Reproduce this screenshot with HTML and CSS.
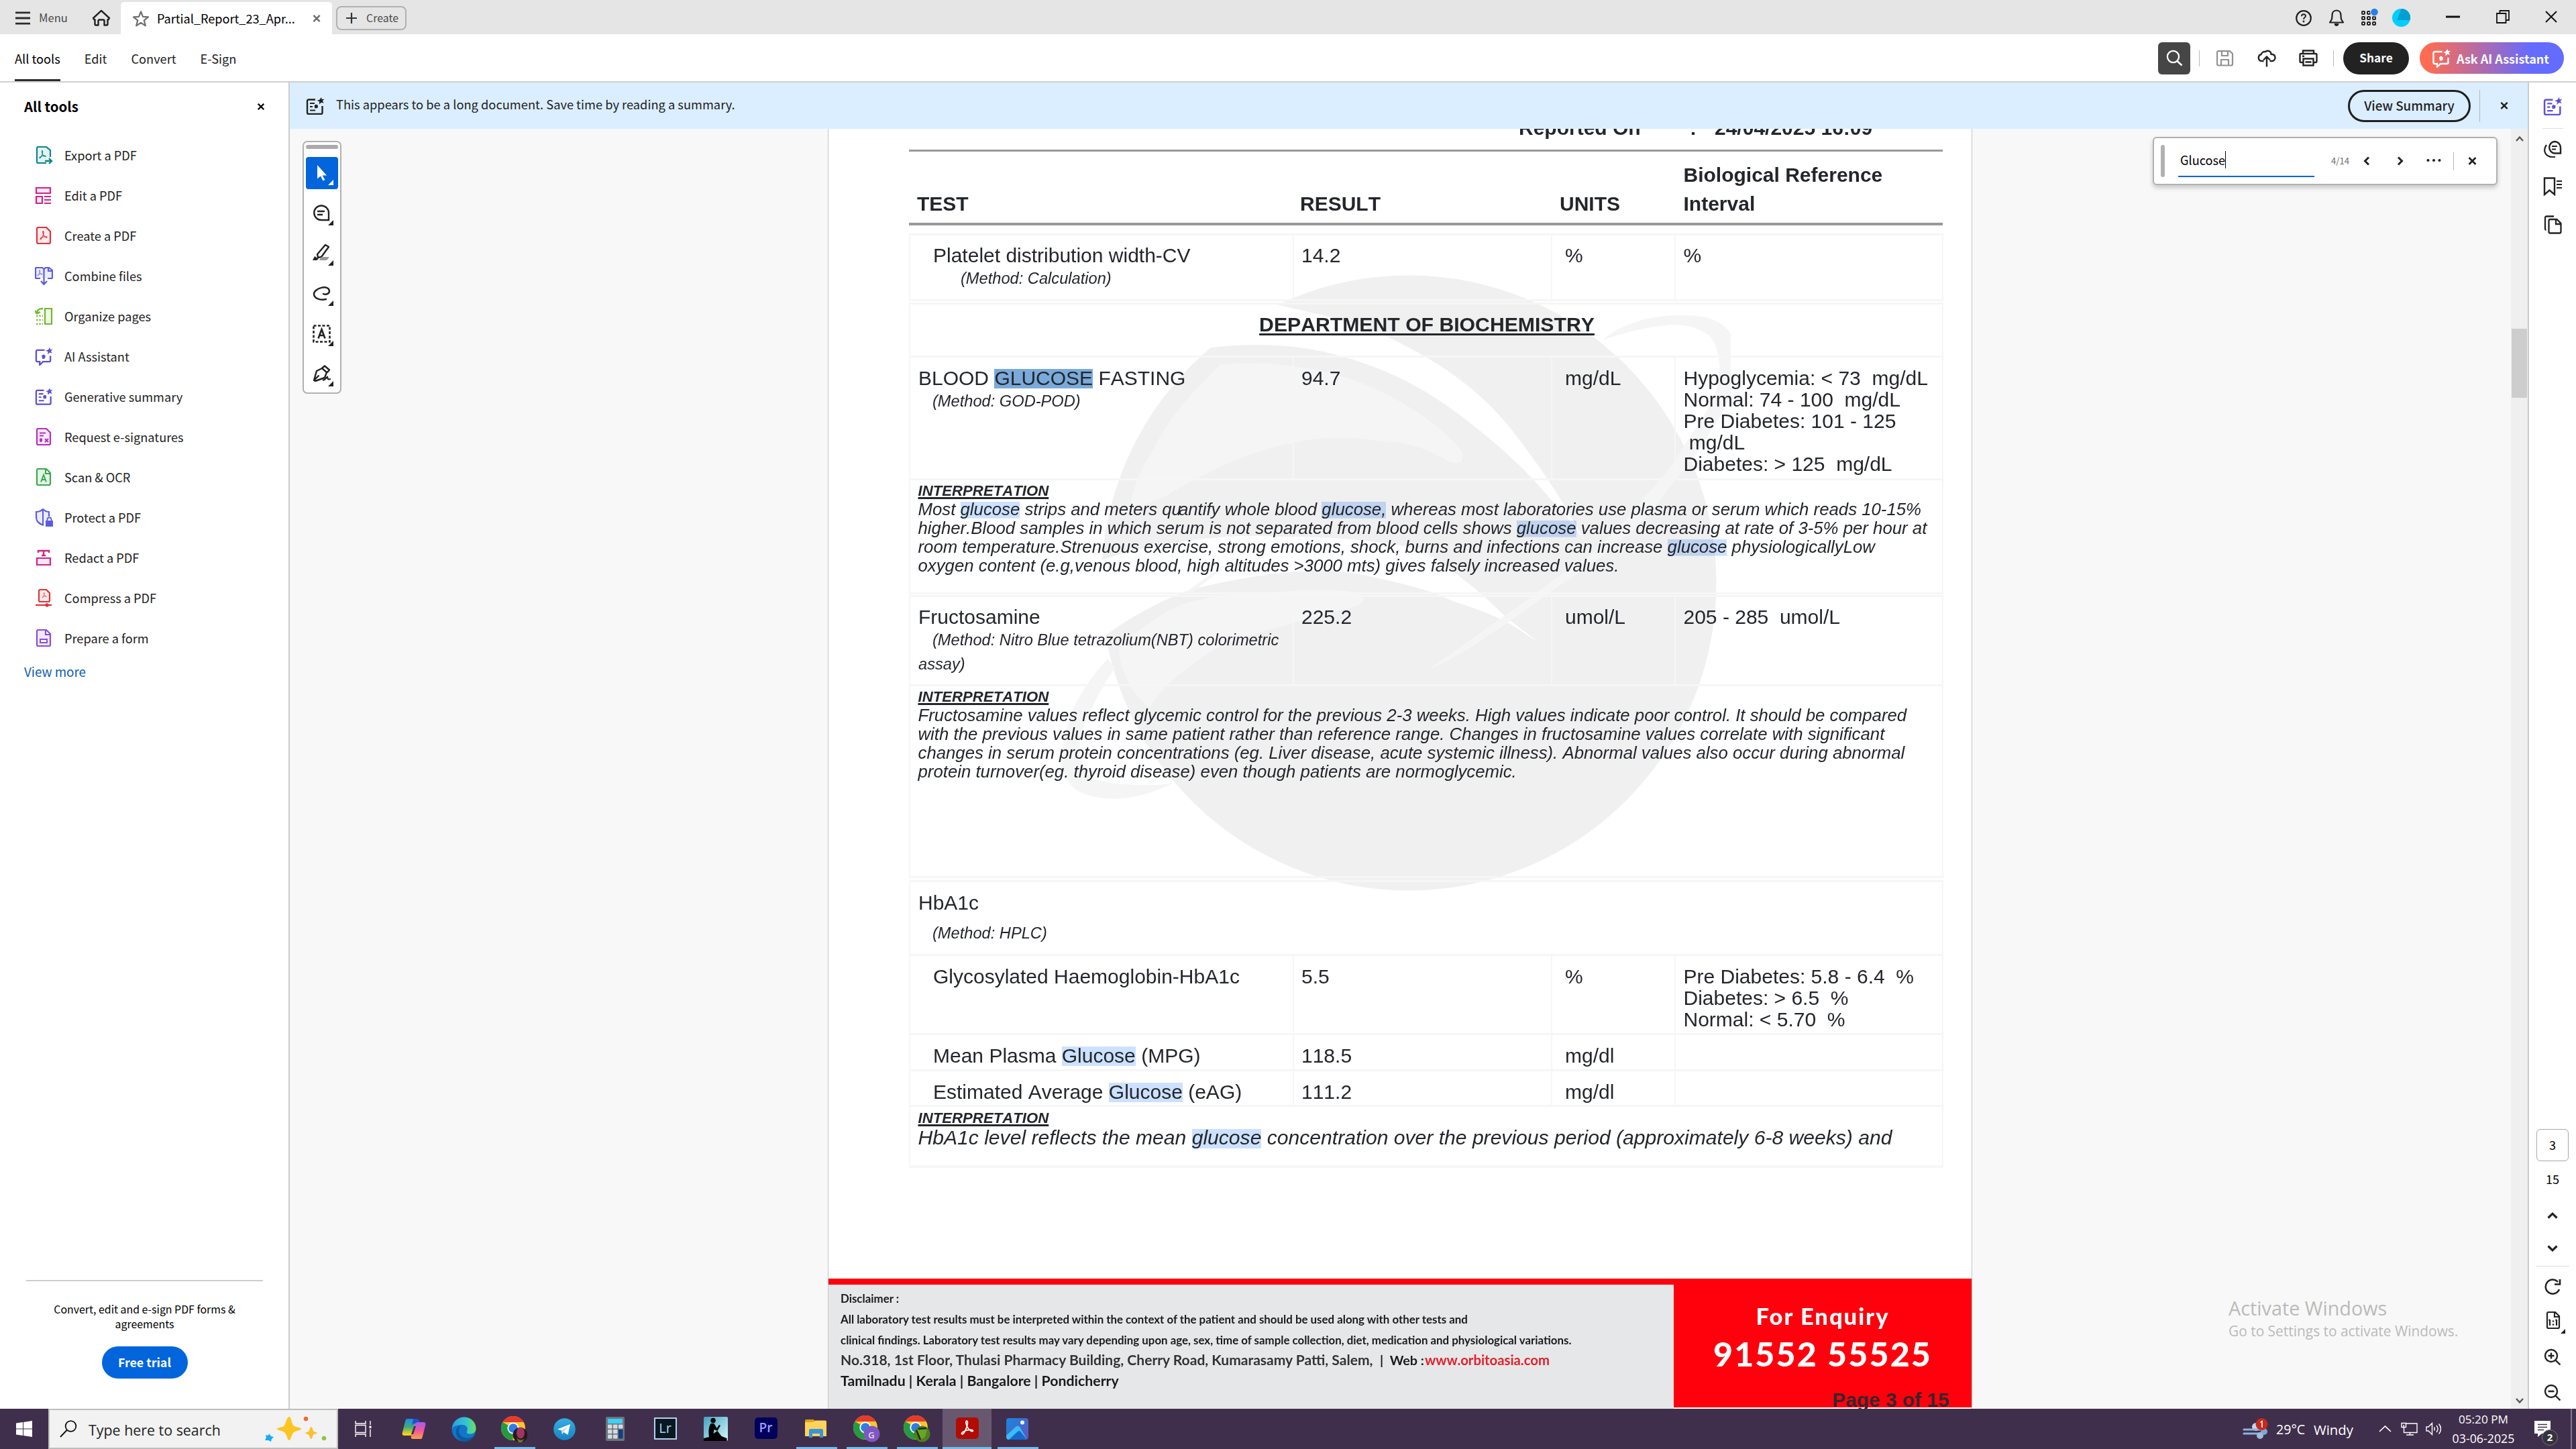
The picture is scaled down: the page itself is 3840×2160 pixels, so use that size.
FILE: index.html
```html
<!DOCTYPE html>
<html lang="en">
<head>
<meta charset="utf-8">
<title>Partial_Report_23_Apr</title>
<link rel="stylesheet" href="styles.css">
</head>
<body>
<svg class="defs" aria-hidden="true">
  <defs>
    <linearGradient id="gCop" x1="0" y1="0" x2="0" y2="1"><stop offset="0" stop-color="#1f8bf0"/><stop offset=".5" stop-color="#3fae74"/><stop offset=".9" stop-color="#f0d020"/></linearGradient>
    <linearGradient id="gCop2" x1="0" y1="0" x2="0" y2="1"><stop offset="0" stop-color="#a45cf0"/><stop offset=".5" stop-color="#f0569b"/><stop offset="1" stop-color="#ffa24a"/></linearGradient>
    <linearGradient id="gEdge" x1="0" y1="0" x2="1" y2="0"><stop offset="0" stop-color="#2a9fe0"/><stop offset=".6" stop-color="#35c6d0"/><stop offset="1" stop-color="#6ee05a"/></linearGradient>
    <linearGradient id="gTg" x1="0" y1="0" x2="0" y2="1"><stop offset="0" stop-color="#37aee2"/><stop offset="1" stop-color="#1583c6"/></linearGradient>
    <linearGradient id="gPh" x1="0" y1="0" x2="1" y2="1"><stop offset="0" stop-color="#1488e0"/><stop offset="1" stop-color="#6a52b8"/></linearGradient>
    <linearGradient id="gKd" x1="0" y1="0" x2="1" y2="1"><stop offset="0" stop-color="#3fa3c4"/><stop offset="1" stop-color="#dcf6fa"/></linearGradient>
  </defs>
  <symbol id="spark" viewBox="0 0 12 12"><path d="M7 0l1 3.4L12 3 9 6l2.2 3.6L7 8.4 3.600 11.500l.4-4.500L0 5.200l4.200-1z"/></symbol>
  <symbol id="summary" viewBox="0 0 28 26"><path d="M14 3.500H4a2 2 0 0 0-2 2V23a2 2 0 0 0 2 2h18.500a2 2 0 0 0 2-2V13" fill="none" stroke="currentColor" stroke-width="2.400"/><path d="M6 9h7M6 14h4M6 19.500h8" stroke="currentColor" stroke-width="2.200"/><path d="M12.500 13l2-2.500 3.500 1.500-.5 4-4 .5z" fill="currentColor"/><use href="#spark" x="16" y="0" width="12" height="11" fill="currentColor"/></symbol>
  <symbol id="aichat" viewBox="0 0 28 28"><path d="M15 4H4a2 2 0 0 0-2 2v14a2 2 0 0 0 2 2h3.500v5l5-5H22a2 2 0 0 0 2-2v-7" fill="none" stroke="currentColor" stroke-width="2.400"/><path d="M10.500 12.500l3-2 3 2.500-1 4-4 .5z" fill="currentColor"/><use href="#spark" x="16" y="0" width="12" height="11" fill="currentColor"/></symbol>
  <symbol id="x" viewBox="0 0 14 14"><path d="M2 2l10 10M12 2L2 12" stroke="currentColor" stroke-width="2.700" fill="none"/></symbol>
  <symbol id="chev" viewBox="0 0 10 14"><path d="M8 1.500L2.500 7 8 12.500" stroke="currentColor" stroke-width="3" fill="none"/></symbol>
  <symbol id="chevUp" viewBox="0 0 16 10"><path d="M1.500 8.500L8 2.200l6.500 6.300" stroke="currentColor" stroke-width="3.200" fill="none"/></symbol>
  <symbol id="acro" viewBox="0 0 20 22"><path d="M9 1c2 0 1.500 4 .5 7.500C8.500 12 5 20 3 20s-2-2.500 3-4.500 12-2.500 12-.5-4 1-7-3.500S7 1 9 1z" fill="none" stroke="currentColor" stroke-width="1.700"/></symbol>
  <symbol id="chrome" viewBox="0 0 36 36"><circle cx="18" cy="18" r="18" fill="#fdc52d"/><path d="M18 18l-.5 18A18 18 0 0 1 2.400 9z" fill="#269a43"/><path d="M18 18L2.400 9h31.200A18 18 0 0 0 2.400 9z" fill="#e33b2e"/><circle cx="18" cy="18" r="8.600" fill="#fff"/><circle cx="18" cy="18" r="6.800" fill="#2f7de9"/></symbol>
</svg>

<div class="tabbar">
  <svg class="burger" width="23" height="20" viewBox="0 0 23 20"><path d="M0 1.800h22M0 10h22M0 18.200h22" stroke="#2c2c2c" stroke-width="2.800"/></svg>
  <span class="menu">Menu</span>
  <svg class="home" width="28" height="25" viewBox="0 0 28 25"><path d="M14 1.800L2 13l1.500 2.200H4.500V22a1.500 1.500 0 0 0 1.500 1.500h3.500V17a1.500 1.500 0 0 1 1.500-1.500h6a1.500 1.500 0 0 1 1.500 1.500v6.500H22a1.500 1.500 0 0 0 1.500-1.500v-6.800h1L26 13z" fill="none" stroke="#222" stroke-width="2.400" stroke-linejoin="round"/></svg>
  <div class="tab">
    <svg width="26" height="25" viewBox="0 0 26 25"><path d="M13 2.300l3 7.500 8 .6-6.200 5 2 7.900L13 18.900l-6.800 4.400 2-7.900L2 10.400l8-.6z" fill="none" stroke="#6e6e6e" stroke-width="2.200" stroke-linejoin="round"/></svg>
    <span class="tab-title">Partial_Report_23_Apr...</span>
    <svg class="tab-x" width="14" height="13"><use href="#x"/></svg>
  </div>
  <div class="create"><svg width="16" height="16" viewBox="0 0 16 16"><path d="M8 0v16M0 8h16" stroke="#333" stroke-width="2.200"/></svg><span>Create</span></div>
  <div class="sys">
    <svg width="26" height="26" viewBox="0 0 26 26"><circle cx="13" cy="13" r="10.800" fill="none" stroke="#222" stroke-width="2.200"/><path d="M10 10.200c0-4 6-3.800 6-.4 0 2.400-3 2.200-3 5" fill="none" stroke="#222" stroke-width="2"/><circle cx="13" cy="18" r="1.400" fill="#222"/></svg>
    <svg width="24" height="28" viewBox="0 0 24 28"><path d="M12 2.500c-4.500 0-6.500 3.500-6.500 7.500 0 6-1 7-3.500 10.500h20C19.500 17 18.500 16 18.500 10c0-4-2-7.500-6.500-7.500z" fill="none" stroke="#222" stroke-width="2.200" stroke-linejoin="round"/><path d="M9 22.500h6a3 3 0 0 1-6 0z" fill="#222" stroke="#222"/></svg>
    <svg width="26" height="28" viewBox="0 0 26 28"><g fill="none" stroke="#222" stroke-width="2"><rect x="2" y="6" width="4" height="4" rx="1"/><rect x="10" y="6" width="4" height="4" rx="1"/><rect x="2" y="14" width="4" height="4" rx="1"/><rect x="10" y="14" width="4" height="4" rx="1"/><rect x="18" y="14" width="4" height="4" rx="1"/><rect x="2" y="22" width="4" height="4" rx="1"/><rect x="10" y="22" width="4" height="4" rx="1"/><rect x="18" y="22" width="4" height="4" rx="1"/></g><circle cx="20.500" cy="7" r="6.500" fill="#e5e5e5"/><circle cx="20.500" cy="7" r="5.300" fill="#2680eb"/></svg>
    <svg width="27" height="27" viewBox="0 0 27 27"><circle cx="13.500" cy="13.500" r="13.500" fill="#00ceff"/><path d="M13.500 0a13.500 13.500 0 0 1 13.300 17H7z" fill="#00a0cf"/></svg>
    <svg class="min" width="22" height="20" viewBox="0 0 22 20"><path d="M0 10h21" stroke="#111" stroke-width="3"/></svg>
    <svg class="rest" width="20" height="20" viewBox="0 0 20 20"><path d="M1 5h13.500v14H1zM5.500 5V1H19v14h-4.500" fill="none" stroke="#111" stroke-width="1.800"/></svg>
    <svg class="cls" width="18" height="18" viewBox="0 0 18 18"><path d="M1 1l16 16M17 1L1 17" stroke="#111" stroke-width="2"/></svg>
  </div>
</div>

<div class="toolbar">
  <nav><span class="on">All tools</span><span>Edit</span><span>Convert</span><span>E-Sign</span></nav>
  <div class="actions">
    <div class="search"><svg width="25" height="25" viewBox="0 0 25 25"><circle cx="10.500" cy="10.500" r="8.600" fill="none" stroke="#fff" stroke-width="2.300"/><path d="M16.500 17l7 6.500" stroke="#fff" stroke-width="2.500"/></svg></div>
    <i class="vr v1"></i>
    <svg class="save" width="26" height="24" viewBox="0 0 26 24"><path d="M3 1.200h17L24 5v15.500a2 2 0 0 1-2 2H3a2 2 0 0 1-2-2V3.200a2 2 0 0 1 2-2zM8 1.500V8h9V1.500M7 22v-8h11v8" fill="none" stroke="#919191" stroke-width="2.200"/></svg>
    <svg class="cloud" width="28" height="26" viewBox="0 0 28 26"><path d="M9.500 17H6.500a5 5 0 0 1-1-9.800A6 6 0 0 1 12 3c5-3 8.500.5 8.500 3.800 5 .2 6 2.700 6 5.200s-2 5-4.500 5h-3.500" fill="none" stroke="#222" stroke-width="2.400"/><path d="M14 25.500V11M9 15.500l5-5 5 5" fill="none" stroke="#222" stroke-width="2.400"/></svg>
    <svg class="print" width="28" height="25" viewBox="0 0 28 25"><path d="M6 6V1.500h16V6M6 19H3a1.500 1.500 0 0 1-1.500-1.500V7.500A1.500 1.500 0 0 1 3 6h22a1.500 1.500 0 0 1 1.500 1.500v10A1.500 1.500 0 0 1 25 19h-3M6.500 13.500h15v10h-15zM9.500 18.500h9M5 9.800h3" fill="none" stroke="#222" stroke-width="2.400"/></svg>
    <i class="vr v2"></i>
    <div class="share">Share</div>
    <div class="askai"><svg width="29" height="28"><use href="#aichat"/></svg><span>Ask AI Assistant</span></div>
  </div>
</div>

<div class="body">
  <aside>
    <div class="aside-head"><b>All tools</b><svg width="14" height="12"><use href="#x"/></svg></div>
    <ul>
      <li><svg class="teal" width="27" height="27" viewBox="0 0 27 27"><path d="M17 25H5a2 2 0 0 1-2-2V3a2 2 0 0 1 2-2h12l6 5v10" fill="#e3f3f3" stroke="currentColor" stroke-width="2.200"/><use href="#acro" x="5" y="6" width="13" height="13"/><path d="M15 22h9M21 18l4 4-4 4" stroke="currentColor" stroke-width="2.400" fill="none"/></svg>Export a PDF</li>
      <li><svg class="pink" width="27" height="27" viewBox="0 0 27 27"><path d="M2 2h21v8H2zM2 15h9v10H2z" fill="#fbe6f2" stroke="currentColor" stroke-width="2.200"/><path d="M14 15h10M14 20h10M14 25h10" stroke="currentColor" stroke-width="2.200"/></svg>Edit a PDF</li>
      <li><svg class="red" width="27" height="27" viewBox="0 0 27 27"><path d="M5 1h12l6 6v16a2 2 0 0 1-2 2H5a2 2 0 0 1-2-2V3a2 2 0 0 1 2-2z" fill="#fdebea" stroke="currentColor" stroke-width="2.200"/><use href="#acro" x="6" y="6" width="14" height="14"/></svg>Create a PDF</li>
      <li><svg class="blue" width="27" height="27" viewBox="0 0 27 27"><path d="M8 17H2a1 1 0 0 1-1-1V2a1 1 0 0 1 1-1h9l2.500 2L16 1h5l5 4v11a1 1 0 0 1-1 1h-6" fill="#ececfb" stroke="currentColor" stroke-width="2.200"/><path d="M13.500 3v22M9 21l4.500 5 4.500-5M20 1v5h6" fill="none" stroke="currentColor" stroke-width="2.200"/><use href="#acro" x="3" y="4" width="9" height="10"/></svg>Combine files</li>
      <li><svg class="lime" width="27" height="27" viewBox="0 0 27 27"><path d="M15 2h10v23H15z" fill="#f0f8e6" stroke="currentColor" stroke-width="2.200"/><path d="M2 13h10M2 19h10M2 25h10" stroke="currentColor" stroke-width="2.200" stroke-dasharray="2.500 1.800"/><path d="M3 9c0-5 4-7.500 9-7M0 5l3 4.500L8 7" fill="none" stroke="currentColor" stroke-width="2.400"/></svg>Organize pages</li>
      <li><svg class="indigo" width="27" height="27"><use href="#aichat"/></svg>AI Assistant</li>
      <li><svg class="indigo" width="27" height="26"><use href="#summary"/></svg>Generative summary</li>
      <li><svg class="magenta" width="27" height="27" viewBox="0 0 27 27"><path d="M5 1h12l6 6v16a2 2 0 0 1-2 2H5a2 2 0 0 1-2-2V3a2 2 0 0 1 2-2z" fill="#fae8fb" stroke="currentColor" stroke-width="2.200"/><path d="M7 7.500h9M7 11.500h6M15 16l5 5M20 16l-5 5" stroke="currentColor" stroke-width="2"/><path d="M7 15.500h4v4l-2 2-2-2z" fill="currentColor"/></svg>Request e-signatures</li>
      <li><svg class="green" width="27" height="27" viewBox="0 0 27 27"><path d="M5 1h12l6 6v16a2 2 0 0 1-2 2H5a2 2 0 0 1-2-2V3a2 2 0 0 1 2-2zM16 1v7h7" fill="#e6f5e9" stroke="currentColor" stroke-width="2.200"/><path d="M9 20.500l4-10.500 4 10.500M10.500 17h5" fill="none" stroke="currentColor" stroke-width="2"/></svg>Scan &amp; OCR</li>
      <li><svg class="blue" width="27" height="27" viewBox="0 0 27 27"><path d="M13 25C5 22 2 19 2 13V5c5 0 7-1 10-4 3 3 5 4 9 4v7" fill="#ececfb" stroke="currentColor" stroke-width="2.200"/><path d="M12 1v24" stroke="currentColor" stroke-width="2"/><path d="M16 18h11v9H16z" fill="currentColor"/><path d="M18.500 18v-1.500a3 3 0 0 1 6 0V18" fill="none" stroke="currentColor" stroke-width="1.800"/></svg>Protect a PDF</li>
      <li><svg class="pink" width="27" height="27" viewBox="0 0 27 27"><path d="M3 14h20v10H3z" fill="#fbe6f2" stroke="currentColor" stroke-width="2.200"/><path d="M5 6V3h16v3M13 3v7M10 10h6" fill="none" stroke="currentColor" stroke-width="2.400"/></svg>Redact a PDF</li>
      <li><svg class="red" width="27" height="27" viewBox="0 0 27 27"><path d="M8 1h9l5 5v11a2 2 0 0 1-2 2H8a2 2 0 0 1-2-2V3a2 2 0 0 1 2-2z" fill="#fdebea" stroke="currentColor" stroke-width="2.200"/><use href="#acro" x="9" y="5" width="10" height="9"/><path d="M1 24h24" stroke="currentColor" stroke-width="2.200"/><circle cx="18" cy="24" r="2.700" fill="currentColor"/></svg>Compress a PDF</li>
      <li><svg class="purple" width="27" height="27" viewBox="0 0 27 27"><path d="M5 1h12l6 6v16a2 2 0 0 1-2 2H5a2 2 0 0 1-2-2V3a2 2 0 0 1 2-2zM16 1v7h7" fill="#f1e8fa" stroke="currentColor" stroke-width="2.200"/><path d="M8 15h10v5H8z" fill="#fff" stroke="currentColor" stroke-width="2"/></svg>Prepare a form</li>
    </ul>
    <a class="more">View more</a>
    <div class="promo"><p>Convert, edit and e-sign PDF forms &amp; agreements</p><div class="trial">Free trial</div></div>
  </aside>

  <main>
    <div class="banner">
      <svg width="28" height="26"><use href="#summary"/></svg>
      <span>This appears to be a long document. Save time by reading a summary.</span>
      <div class="viewsum">View Summary</div>
      <i class="vr"></i>
      <svg class="bx" width="14" height="13"><use href="#x"/></svg>
    </div>
    <div class="stage">
      <section class="page">
        <svg class="mark-art" width="1020" height="930" viewBox="1560 405 1020 930">
          <circle cx="2100" cy="869" r="458.500" fill="#f0f0f0"/>
          <path d="M1900 453C1960 468 2010 476 2064 500C2170 550 2225 600 2268 660C2310 715 2340 765 2363 808C2345 780 2330 765 2308 740C2270 695 2230 660 2182 623C2120 575 2060 548 2003 532C1945 514 1870 509 1800 519L1770 500L1850 430Z" fill="#fff"/>
          <path d="M1635 836L1642 835C1680 822 1710 815 1737 812C1800 800 1850 797 1909 800C1990 800 2060 806 2120 820C2160 845 2205 880 2245 920L2294 958C2275 946 2258 933 2239 924C2215 912 2190 904 2165 896C2130 878 2090 870 2050 861C2010 850 1970 850 1932 852C1870 857 1810 870 1771 880C1725 898 1685 920 1651 945L1620 960L1600 850Z" fill="#fff"/>
          <path d="M1820 543C1850 541 1890 540 1927 546C2000 553 2060 580 2120 619C2150 640 2180 668 2181 680C2180 692 2172 692 2160 688C2120 664 2090 658 2050 657C2020 651 1970 650 1929 660C1880 670 1850 682 1823 694C1785 712 1760 725 1737 740L1684 762C1690 715 1705 695 1720 668C1745 620 1780 580 1820 543Z" fill="#f5f5f5"/>
          <path d="M1668 965C1700 935 1735 912 1765 900C1810 887 1860 882 1909 882C1950 878 2000 878 2024 884C2040 892 2032 902 2012 906C1985 913 1955 920 1927 929C1890 940 1850 950 1823 961C1790 980 1770 995 1748 1014C1730 1030 1722 1042 1714 1055C1695 1040 1685 1025 1679 1010C1670 990 1668 980 1668 965Z" fill="#f5f5f5"/>
          <path d="M2389 507C2420 480 2465 469 2509 470C2540 470 2555 475 2567 484C2585 498 2590 515 2590 530C2592 548 2588 565 2584 580C2575 605 2562 625 2549 644C2535 670 2510 700 2492 722C2475 745 2463 760 2452 773C2405 820 2360 850 2314 880C2280 905 2250 928 2222 945C2190 968 2160 985 2130 998C2190 955 2240 920 2280 892C2320 860 2345 845 2371 827C2400 800 2430 770 2452 740C2480 710 2500 685 2512 662C2530 635 2545 615 2555 591C2562 570 2565 555 2563 541C2560 520 2556 505 2544 498C2530 487 2510 484 2492 484C2455 487 2420 496 2389 507Z" fill="#f5f5f5"/>
          <path d="M1748 1167C1720 1183 1680 1194 1645 1190C1625 1188 1608 1182 1599 1173C1585 1158 1582 1140 1583 1124C1585 1100 1592 1078 1599 1059C1612 1030 1630 1005 1651 982L1662 996C1645 1020 1632 1045 1622 1067C1612 1090 1608 1105 1610 1120C1612 1135 1616 1147 1622 1153C1638 1166 1660 1169 1679 1169C1705 1171 1730 1171 1748 1167Z" fill="#f5f5f5"/>
          <path d="M1768 882L1886 800L1778 882Z" fill="#f5f5f5"/>
        </svg>
        <div class="reported"><span>Reported On</span><span>:</span><span>24/04/2025 16:09</span></div>
        <div class="grid thead"><div>TEST</div><div>RESULT</div><div>UNITS</div><div>Biological Reference<br>Interval</div></div>

        <div class="box b1">
          <div class="grid row"><div><p class="in">Platelet distribution width-CV</p><em class="in3 gap4">(Method: Calculation)</em></div><div>14.2</div><div>%</div><div>%</div></div>
        </div>
        <div class="box b2">
          <div class="dept">DEPARTMENT OF BIOCHEMISTRY</div>
          <div class="grid row gluc"><div><p>BLOOD <mark class="cur">GLUCOSE</mark> FASTING</p><em class="gap4">(Method: GOD-POD)</em></div><div>94.7</div><div>mg/dL</div><div class="pre">Hypoglycemia: &lt; 73  mg/dL
Normal: 74 - 100  mg/dL
Pre Diabetes: 101 - 125
 mg/dL
Diabetes: &gt; 125  mg/dL</div></div>
          <div class="interp"><h4>INTERPRETATION</h4><p>Most <mark>glucose</mark> strips and meters q<span class="tight">u</span>antify whole blood <mark>glucose,</mark> whereas most laboratories use plasma or serum which reads 10-15%<br>higher.Blood samples in which serum is not separated from blood cells shows <mark>glucose</mark> values decreasing at rate of 3-5% per hour at<br>room temperature.Strenuous exercise, strong emotions, shock, burns and infections can increase <mark>glucose</mark> physiologicallyLow<br>oxygen content (e.g,venous blood, high altitudes &gt;3000 mts) gives falsely increased values.</p></div>
        </div>
        <div class="box b3">
          <div class="grid row"><div><p>Fructosamine</p><em class="wrap">(Method: Nitro Blue tetrazolium(NBT) colorimetric<br>assay)</em></div><div>225.2</div><div>umol/L</div><div class="pre">205 - 285  umol/L</div></div>
          <div class="interp"><h4>INTERPRETATION</h4><p>Fructosamine values reflect glycemic control for the previous 2-3 weeks. High values indicate poor control. It should be compared<br>with the previous values in same patient rather than reference range. Changes in fructosamine values correlate with significant<br>changes in serum protein concentrations (eg. Liver disease, acute systemic illness). Abnormal values also occur during abnormal<br>protein turnover(eg. thyroid disease) even though patients are normoglycemic.</p></div>
        </div>
        <div class="box b4">
          <div class="hba"><p>HbA1c</p><em>(Method: HPLC)</em></div>
          <div class="grid row r115"><div><p class="in">Glycosylated Haemoglobin-HbA1c</p></div><div>5.5</div><div>%</div><div class="pre">Pre Diabetes: 5.8 - 6.4  %
Diabetes: &gt; 6.5  %
Normal: &lt; 5.70  %</div></div>
          <div class="grid row r51"><div><p class="in">Mean Plasma <mark>Glucose</mark> (MPG)</p></div><div>118.5</div><div>mg/dl</div><div></div></div>
          <div class="grid row r50"><div><p class="in">Estimated Average <mark>Glucose</mark> (eAG)</p></div><div>111.2</div><div>mg/dl</div><div></div></div>
          <div class="interp big"><h4>INTERPRETATION</h4><p>HbA1c level reflects the mean <mark>glucose</mark> concentration over the previous period (approximately 6-8 weeks) and</p></div>
        </div>

        <footer>
          <div class="disc">
            <p>Disclaimer :</p>
            <p>All laboratory test results must be interpreted within the context of the patient and should be used along with other tests and</p>
            <p>clinical findings. Laboratory test results may vary depending upon age, sex, time of sample collection, diet, medication and physiological variations.</p>
            <p class="addr"><span class="soft">No.318, 1st Floor, Thulasi Pharmacy Building, Cherry Road, Kumarasamy Patti, Salem,</span><span class="web">| &nbsp;Web :</span><span class="www">www.orbitoasia.com</span></p>
            <p class="cities">Tamilnadu | Kerala | Bangalore | Pondicherry</p>
          </div>
          <div class="enq"><p class="e1">For Enquiry</p><p class="e2">91552 55525</p><p class="e3">Page 3 of 15</p></div>
        </footer>
      </section>

      <div class="scroll">
        <svg width="12" height="9" viewBox="0 0 12 9"><path d="M1 8l5-5.500L11 8" fill="none" stroke="#555" stroke-width="2.400"/></svg>
        <i class="thumb"></i>
        <svg width="12" height="9" viewBox="0 0 12 9"><path d="M1 1l5 5.500L11 1" fill="none" stroke="#555" stroke-width="2.400"/></svg>
      </div>

      <div class="quick">
        <i class="grip"></i>
        <div class="q on"><svg width="48" height="48" viewBox="0 0 48 48"><path d="M17 12l14 15.500h-6.500l4 6.500-3 1.500-3.500-7-5 4z" fill="#fff"/><path d="M41 34v8h-8z" fill="#fff"/></svg></div>
        <div class="q"><svg width="48" height="48" viewBox="0 0 48 48"><path d="M23 12.500a11 11 0 0 1 11 11V34H23a10.700 10.700 0 0 1 0-21.500z" fill="none" stroke="#222" stroke-width="2.400"/><path d="M17 21h11M17 26h8" stroke="#222" stroke-width="2.400"/><path d="M41 34v8h-8z" fill="#222"/></svg></div>
        <div class="q"><svg width="48" height="48" viewBox="0 0 48 48"><path d="M17 25L29 11l5 3-11 15-5 1z" fill="none" stroke="#222" stroke-width="2.400" stroke-linejoin="round"/><path d="M10 34l3-6 6 4-3 2z" fill="#222"/><path d="M20 34l3-5h12l-4 5z" fill="#999"/><path d="M41 34v8h-8z" fill="#222"/></svg></div>
        <div class="q"><svg width="48" height="48" viewBox="0 0 48 48"><path d="M30 32c-9 2-18-1-18-8 0-8 22-15 23-4 0 4-6 6-9 4" fill="none" stroke="#222" stroke-width="2.500" stroke-linecap="round"/><path d="M41 34v8h-8z" fill="#222"/></svg></div>
        <div class="q"><svg width="48" height="48" viewBox="0 0 48 48"><rect x="11.500" y="11.500" width="24" height="24" fill="none" stroke="#222" stroke-width="2.600" stroke-dasharray="4 2.500"/><path d="M18.500 30.500l5-13.500 5 13.500M20.500 26h6.500" fill="none" stroke="#222" stroke-width="2.600"/><path d="M41 34v8h-8z" fill="#222"/></svg></div>
        <div class="q"><svg width="48" height="48" viewBox="0 0 48 48"><path d="M12 33l4-14 8-4 7 6-3 8-14 5zM24 15l4-3.500 7 6-3.500 4M12.500 32.500l7-7" fill="none" stroke="#222" stroke-width="2.400" stroke-linejoin="round"/><path d="M25 33c5-1 4-3 7-5 1 3 0 4 5 3" fill="none" stroke="#222" stroke-width="2.200"/><path d="M41 34v8h-8z" fill="#222"/></svg></div>
      </div>

      <div class="find">
        <i class="fgrip"></i>
        <div class="finput">Glucose<i></i></div>
        <span class="count">4/14</span>
        <svg class="f1" width="10" height="14"><use href="#chev"/></svg>
        <svg class="f2" width="10" height="14"><use href="#chev"/></svg>
        <svg class="f3" width="22" height="6" viewBox="0 0 22 6"><circle cx="2.500" cy="3" r="2.100" fill="#222"/><circle cx="11" cy="3" r="2.100" fill="#222"/><circle cx="19.500" cy="3" r="2.100" fill="#222"/></svg>
        <i class="vr"></i>
        <svg class="f4" width="15" height="14"><use href="#x"/></svg>
      </div>

      <div class="activate"><p>Activate Windows</p><p>Go to Settings to activate Windows.</p></div>
    </div>
  </main>

  <div class="rail">
    <svg class="r1" width="29" height="27"><use href="#summary"/></svg>
    <i class="hr"></i>
    <svg class="r2" width="28" height="27" viewBox="0 0 28 27"><path d="M17 2a9 9 0 0 1 9 9v8.500h-9A8.800 8.800 0 0 1 17 2z" fill="none" stroke="#222" stroke-width="2.400"/><path d="M13 9h8M13 13.500h6" stroke="#222" stroke-width="2.200"/><path d="M5 7c-6 8-2 18 9 18h4" fill="none" stroke="#222" stroke-width="2.200"/></svg>
    <svg class="r3" width="29" height="28" viewBox="0 0 29 28"><path d="M2 1.500h15V26l-7.500-6.500L2 26z" fill="none" stroke="#222" stroke-width="2.400"/><path d="M20 6h8M20 11h8M20 16h8" stroke="#222" stroke-width="2.200"/></svg>
    <svg class="r4" width="27" height="29" viewBox="0 0 27 29"><path d="M9.500 6h10l6 6v12.500a2 2 0 0 1-2 2h-14a2 2 0 0 1-2-2V8a2 2 0 0 1 2-2zM18 6v7h7" fill="none" stroke="#222" stroke-width="2.300"/><path d="M3.500 22A2 2 0 0 1 2 20V3.500a2 2 0 0 1 2-2h11" fill="none" stroke="#222" stroke-width="2.300"/></svg>
    <div class="pgbox">3</div>
    <span class="pgtot">15</span>
    <svg class="r5" width="16" height="10"><use href="#chevUp"/></svg>
    <svg class="r6" width="16" height="10"><use href="#chevUp"/></svg>
    <i class="hr h2"></i>
    <svg class="r7" width="26" height="26" viewBox="0 0 26 26"><path d="M23 17a10.500 10.500 0 1 1-2-11" fill="none" stroke="#222" stroke-width="2.500"/><path d="M24 2v7.500h-8" fill="none" stroke="#222" stroke-width="2.600"/></svg>
    <svg class="r8" width="34" height="34" viewBox="0 0 34 34"><path d="M9 2h10l6 6v16a2 2 0 0 1-2 2H9a2 2 0 0 1-2-2V4a2 2 0 0 1 2-2zM18 2v7h7M11 13v9M21 13v9M9.500 14.500L11 13M19.500 14.500L21 13" fill="none" stroke="#222" stroke-width="2.200"/><circle cx="16" cy="15.500" r="1.300" fill="#222"/><circle cx="16" cy="20.500" r="1.300" fill="#222"/><path d="M34 27v7h-7z" fill="#222"/></svg>
    <svg class="r9" width="26" height="26" viewBox="0 0 26 26"><circle cx="11" cy="11" r="9" fill="none" stroke="#222" stroke-width="2.400"/><path d="M17.500 17.500l7 7M6.500 11h9M11 6.500v9" stroke="#222" stroke-width="2.400"/></svg>
    <svg class="r10" width="26" height="26" viewBox="0 0 26 26"><circle cx="11" cy="11" r="9" fill="none" stroke="#222" stroke-width="2.400"/><path d="M17.500 17.500l7 7M6.500 11h9" stroke="#222" stroke-width="2.400"/></svg>
  </div>
</div>

<div class="taskbar">
  <div class="start"><svg width="24" height="24" viewBox="0 0 24 24"><path d="M0 3.400l10-1.400v9.400H0zM11 1.900L24 0v11.400H11zM0 12.400h10v9.500L0 20.600zM11 12.400h13V24l-13-1.900z" fill="#fff"/></svg></div>
  <div class="tsearch">
    <svg width="26" height="26" viewBox="0 0 26 26"><circle cx="16.500" cy="9" r="7.800" fill="none" stroke="#111" stroke-width="1.800"/><path d="M11 14.500L1 25" stroke="#111" stroke-width="1.900"/></svg>
    <span>Type here to search</span>
    <svg class="stars" width="94" height="38" viewBox="0 0 94 38"><path d="M36 1c4 0 3 12 8 14s10 2 10 4-7 2-11 5-4 12-7 12-3-9-7-12-11-3-11-5 7-2 10-4 4-14 8-14z" fill="#fcc521"/><path d="M69 16c2 0 2 6 4 7s5 1 5 2-4 1-6 3-1 6-3 6-2-4-4-6-5-2-5-3 4-1 5-2 2-7 4-7z" fill="#fbc02d"/><circle cx="61" cy="4" r="3.300" fill="#f4692e"/><circle cx="88" cy="33" r="3.300" fill="#8dc63f"/><path d="M6 26l3 4 4 1-3 3-1 4-4-2-5 0 2-4-1-4 4 1z" fill="#12aef0"/></svg>
  </div>
  <div class="apps">
    <div><svg width="26" height="24" viewBox="0 0 26 24"><path d="M1 0v4h15V0M1 24v-4h15v4M1 6.500h15v11H1zM23 0v6M23 12.500V24" fill="none" stroke="#fff" stroke-width="1.400"/><path d="M21.500 7.500h3v3.500h-3z" fill="#fff"/></svg></div>
    <div><svg width="36" height="32" viewBox="0 0 36 32"><path d="M8 1h11c3 0 4 2 3 5l-5 16c-1 3-3 4-5 4H4c-3 0-4-2-3-5L5 5c1-3 1-4 3-4z" fill="url(#gCop)"/><path d="M17 1h6c2 0 3 2 3 4l1 3h-8c-2 0-3 1-4 3z" fill="#1c50d0"/><path d="M28 31H17c-3 0-4-2-3-5l5-16c1-3 3-4 5-4h8c3 0 4 2 3 5l-4 16c-1 3-1 4-3 4z" fill="url(#gCop2)"/><path d="M18 12l-4 12h3l4-12z" fill="#412f4c"/></svg></div>
    <div><svg width="37" height="37" viewBox="0 0 37 37"><circle cx="18.500" cy="18.500" r="18" fill="#1275c8"/><path d="M1 18C1 6 12 0 20 .5 30 1 36.500 9 36.500 17c0 7-6 9-10 8.500-5-.5-4-3-3-5 2-6-4-9-8-8.500C6 12 1 16 1 18z" fill="url(#gEdge)"/><path d="M15.500 12C9 15 9 28 19 31c6 2 12 0 15-3-4 7-10 9-15.500 9C11 36 6 28 7 21c.5-5 4-8 8.500-9z" fill="#0c59a4"/></svg></div>
    <div class="run"><svg width="39" height="39" viewBox="0 0 39 39"><use href="#chrome" width="36" height="36"/><circle cx="28.500" cy="28" r="11" fill="#281820"/><ellipse cx="29" cy="25" rx="6" ry="8.500" fill="#a03560"/><path d="M23 32c3 4 8 5 12 1l-4 6h-5z" fill="#6b7a2a"/></svg></div>
    <div><svg width="33" height="33" viewBox="0 0 33 33"><circle cx="16.500" cy="16.500" r="16.300" fill="url(#gTg)"/><path d="M6 16.500L25 9l-3.500 16-6-4-2.500 3-1-5.500z" fill="#fff"/><path d="M12 18.500l10-7-6.500 9-2.500 3.500z" fill="#c8daea"/></svg></div>
    <div><svg width="28" height="36" viewBox="0 0 28 36"><rect width="28" height="36" rx="2" fill="#6c757d"/><rect x="3" y="3" width="22" height="7" fill="#3fd0f5"/><g fill="#d5dae0"><rect x="3" y="11.500" width="6.500" height="6" rx="1"/><rect x="11" y="11.500" width="6.500" height="6" rx="1"/><rect x="19" y="11.500" width="6.500" height="6" rx="1"/><rect x="3" y="19" width="6.500" height="6" rx="1"/><rect x="11" y="19" width="6.500" height="6" rx="1"/><rect x="3" y="26.500" width="6.500" height="6" rx="1"/><rect x="11" y="26.500" width="6.500" height="6" rx="1"/></g><rect x="19" y="19" width="6.500" height="13.500" rx="1" fill="#123f7d"/></svg></div>
    <div><span class="lr">Lr</span></div>
    <div><svg width="36" height="36" viewBox="0 0 36 36"><rect width="36" height="36" rx="2" fill="url(#gKd)"/><circle cx="14" cy="5.500" r="3.800" fill="#000"/><path d="M10.500 10h5l4 7 3.500-5 2 1-4.500 8-5-2-1 6 6-4 6 8 8 3v4H0v-4l8-2c-1-7-1-15 2.500-20z" fill="#000"/></svg></div>
    <div><span class="pr">Pr</span></div>
    <div class="run"><svg width="33" height="28" viewBox="0 0 33 28"><path d="M0 2a2 2 0 0 1 2-2h11l2 4H0z" fill="#e2a20b"/><path d="M0 4h12l3-2.500h15a2 2 0 0 1 2 2V25H0z" fill="#ffd35b"/><path d="M6 27V16a2 2 0 0 1 2-2h17a2 2 0 0 1 2 2v11h-5v-6H11v6z" fill="#3a94dc"/></svg></div>
    <div class="run"><svg width="40" height="40" viewBox="0 0 40 40"><use href="#chrome" width="36" height="36"/><circle cx="27.500" cy="27.500" r="12" fill="#7e57c2"/></svg><b class="badge">G</b></div>
    <div class="run"><svg width="40" height="40" viewBox="0 0 40 40"><use href="#chrome" width="36" height="36"/><circle cx="27.500" cy="27.500" r="12" fill="#4d7f1e"/><path d="M18 26c2-6 12-8 17-4l-3 10-7 4-2-7z" fill="#69a522"/><path d="M19 22l6 14M22 20l12-1" stroke="#1c2b10" stroke-width="2.500"/></svg></div>
    <div class="run active"><span class="pdf"><svg width="22" height="23"><use href="#acro"/></svg></span></div>
    <div class="run"><svg width="33" height="32" viewBox="0 0 33 32"><rect width="33" height="32" rx="4" fill="url(#gPh)"/><path d="M0 26l14-13c2-2 4-2 6 0l10 17c-1 2-2 2-4 2H4c-3 0-4-2-4-6z" fill="#38bdf5"/><path d="M4 32l13-12c2-2 4-1 5 1l8 10-3 1z" fill="#1668d0"/><circle cx="24" cy="6.500" r="3" fill="#e8f4ff"/></svg></div>
  </div>
  <div class="tray">
    <svg width="38" height="34" viewBox="0 0 38 34"><circle cx="20" cy="14" r="6" fill="#c9d6e6"/><path d="M2 18h24M2 24h28" stroke="#8db3dc" stroke-width="3.200" stroke-linecap="round"/><circle cx="32" cy="21" r="5" fill="#7ea6d2"/><circle cx="26" cy="27" r="5" fill="#9cbbdd"/><circle cx="28.500" cy="10" r="9" fill="#c42b1c"/><path d="M26.500 7.500l2.500-2v9.500" fill="none" stroke="#fff" stroke-width="1.500"/></svg>
    <span class="deg">29°C</span><span class="wind">Windy</span>
    <svg class="t1" width="19" height="10" viewBox="0 0 19 10"><path d="M1 9l8.500-8L18 9" fill="none" stroke="#fff" stroke-width="1.700"/></svg>
    <svg class="t2" width="25" height="20" viewBox="0 0 25 20"><path d="M8 2h16v13.500H4.500V9M8 19h11M13.500 15.500V19M1 1.500h6.500v6H1zM4.200 4v5" fill="none" stroke="#fff" stroke-width="1.400"/></svg>
    <svg class="t3" width="23" height="20" viewBox="0 0 23 20"><path d="M1 7h3l5.500-5.500v17L4 13H1zM12.500 7.500c1 1.500 1 3.500 0 5M16 5c2.500 3 2.500 7 0 10M19.500 2.500c4 4.500 4 10.500 0 15" fill="none" stroke="#fff" stroke-width="1.400"/></svg>
    <div class="clock"><span>05:20 PM</span><span>03-06-2025</span></div>
    <div class="note"><svg width="24" height="24" viewBox="0 0 24 24"><path d="M0 0h24v19H11l-6 5v-5H0z" fill="#fff"/><path d="M5 5.500h14M5 9.500h14M5 13.500h9" stroke="#412f4c" stroke-width="1.500"/></svg><b>2</b></div>
    <i class="peek"></i>
  </div>
</div>
</body>
</html>
```
FILE: styles.css
```css
*{box-sizing:border-box}
body{margin:0;width:3840px;height:2160px;overflow:hidden;background:#fff;color:#222;font:18.2px/24px "Noto Sans CJK SC","Noto Sans",sans-serif;white-space:nowrap}
p,ul,h4{margin:0;padding:0}
svg,i{display:block;flex:none}
.defs{position:absolute;width:0;height:0}
.vr{width:1px;background:#b8b8b8}

/* window tab strip */
.tabbar{height:51px;background:#e5e5e5;display:flex;align-items:flex-start;position:relative}
.burger{margin:17px 0 0 23px}
.menu{margin:14px 0 0 12px;width:43px;font-size:16.6px;color:#4b4b4b}
.home{margin:14px 0 0 36px}
.tab{margin:3px 0 0 15px;width:315px;height:48px;background:#fff;border-radius:5px 5px 0 0;display:flex;align-items:center;padding-left:17px;color:#000}
.tab-title{margin-left:11px;width:220px;font-size:18.1px}
.tab-x{margin-left:11px;color:#6e6e6e}
.create{margin:9px 0 0 6px;width:105px;height:36px;border:2px solid #b1b1b1;border-radius:8px;display:flex;align-items:center;padding-left:13px;gap:14px;font-size:15.9px;color:#4b4b4b}
.sys{margin-left:auto;display:flex;align-items:center;height:53px;padding-right:28px}
.sys svg+svg{margin-left:24px}
.sys svg:nth-child(3){margin-left:24px;margin-top:-3px}
.sys svg:nth-child(4){margin-left:21px}
.sys .min{margin-left:53px!important;margin-top:-4px}
.sys .rest{margin-left:53px!important;margin-top:-4px}
.sys .cls{margin-left:53px!important;margin-top:-4px}

/* main toolbar */
.toolbar{height:72px;border-bottom:2px solid #d0d0d0;display:flex;justify-content:space-between}
nav{display:flex;padding:24px 0 0 22px;gap:36px}
nav span{height:46px}
nav .on{color:#000;border-bottom:3px solid #2c2c2c}
.actions{display:flex;align-items:center;height:71px;padding-right:18px}
.search{width:48px;height:48px;border-radius:6px;background:#464646;display:flex;align-items:center;justify-content:center}
.toolbar .vr{height:24px}
.v1{margin:0 25px 0 13px}
.v2{margin:0 14px 0 23px}
.cloud{margin:0 34px 0 35px}
.share{width:98px;height:48px;border-radius:24px;background:#222;color:#fff;font-weight:700;font-size:17.3px;line-height:46px;text-align:center}
.askai{margin-left:16px;width:215px;height:47px;border-radius:24px;background:linear-gradient(90deg,#ff6c52 5%,#646bff 78%);color:#fff;font-weight:700;font-size:18px;display:flex;align-items:center;padding-left:18px;gap:8px}

.body{display:flex;height:1977px}

/* left panel */
aside{width:432px;border-right:2px solid #ccc;display:flex;flex-direction:column}
.aside-head{display:flex;justify-content:space-between;align-items:center;padding:22px 34px 0 36px;height:50px;color:#000;font-size:20.4px}
.aside-head b{margin-bottom:3px}
aside ul{list-style:none;margin-top:28px}
li{height:60px;display:flex;align-items:center;padding-left:52px;gap:17px}
.teal{color:#0f8488}
.pink{color:#cf2485}
.red{color:#db353b}
.blue{color:#5c5ce0}
.lime{color:#6fb92f}
.indigo{color:#5d50d4}
.magenta{color:#b130bd}
.green{color:#3da74e}
.purple{color:#8a4fd0}
.more{margin:8px 0 0 36px;color:#0d5ead;font-size:18.8px}
.promo{margin:auto 38px 45px 39px;border-top:2px solid #ccc;padding-top:31px;text-align:center;font-size:15.9px;line-height:22px;white-space:normal;color:#000}
.promo p{padding:0 35px;height:66px}
.trial{width:128px;height:48px;margin:0 auto;border-radius:24px;background:#0265dc;color:#fff;font-weight:700;font-size:17.8px;line-height:47px}

/* summary banner */
main{width:3336px;display:flex;flex-direction:column}
.banner{height:69px;background:#dbeeff;display:flex;align-items:center;padding-left:24px}
.banner span{margin-left:17px;margin-bottom:5px;font-size:18.3px}
.viewsum{margin-left:auto;width:183px;height:48px;border:3px solid #1f1f1f;border-radius:24px;font-weight:500;font-size:18.8px;line-height:39px;text-align:center}
.banner .vr{height:48px;margin:0 29px 0 13px}
.bx{margin-right:28px}

/* document area */
.stage{flex:1;position:relative;background:#f8f8f8;display:flex;justify-content:space-between;height:1908px;overflow:hidden}
.page{position:relative;isolation:isolate;margin-left:802px;width:1706px;height:1908px;background:#fff;border:solid #c6c6c6;border-width:0 1px;font:30px/32px "Liberation Sans",Arial,sans-serif;font-kerning:none;color:#23262b;overflow:hidden}
.mark-art{position:absolute;left:325px;top:213px;z-index:-1}
.reported{margin-top:-17px;height:32px;display:flex;font-weight:700}
.reported span:nth-child(1){margin-left:1029px;width:255px}
.reported span:nth-child(2){width:37px}
.grid{display:grid;grid-template-columns:570px 385px 184px 1fr}
.thead{margin:16px 0 0 120px;width:1541px;height:113px;border:solid #999;border-width:3px 0 4px;padding:0 2px 7px 0;align-items:end;font-weight:700;line-height:43px}
.thead div:nth-child(1){padding-left:12px}
.thead div:nth-child(2){padding-left:13px}
.thead div:nth-child(3){padding-left:15px}
.thead div:nth-child(4){padding-left:15.500px}
.box{margin-left:120px;width:1542px;border:solid #f6f6f6;border-width:3px 2px}
.row>div{padding-top:14.5px}
.row>div+div{border-left:2px solid #f6f6f6}
.row>div:nth-child(1){padding-left:12px}
.row>div:nth-child(2){padding-left:11px}
.row>div:nth-child(3){padding-left:19px}
.row>div:nth-child(4){padding-left:11.500px}
.in{padding-left:22px}
em{display:block;font-size:23.65px;line-height:30px;padding-left:21px}
.in3{padding-left:63px}
.gap4{margin-top:3px}
.pre{white-space:pre}
.b1{margin-top:12px;height:101px}
.b1 .row{height:95px}
.b1 .row>div{padding-top:13.500px}
.b2{margin-top:2px;height:435px}
.dept{height:79px;border-bottom:3px solid #f6f6f6;padding:13.500px 0 0 2px;text-align:center;font-weight:700;text-decoration:underline 3px;text-underline-offset:3px;text-decoration-skip-ink:none;font-size:30.200px}
.gluc{height:183px;border-bottom:3px solid #f6f6f6}
.interp{padding:2.800px 0 0 11.500px;font-style:italic}
.interp h4{font-size:22.200px;line-height:26px;text-decoration:underline 3px;text-underline-offset:2px;text-decoration-skip-ink:none}
.interp p{font-size:25.770px;line-height:28.1px}
.tight{letter-spacing:-4px}
mark{color:inherit;mix-blend-mode:multiply;background:linear-gradient(#cce1ff,#cce1ff) 0 100%/100% 88% no-repeat}
mark.cur{background-image:linear-gradient(#7aaada,#7aaada)}
.b3{margin-top:1px;height:422px}
.b3 .row{height:133px;border-bottom:3px solid #f6f6f6}
.b3 .row>div{padding-top:13.500px}
.wrap{line-height:36px;padding-left:0;text-indent:21px}
.b4{margin-top:3px;height:429px;border-bottom-width:4px}
.hba{height:110px;border-bottom:3px solid #f6f6f6;padding:15px 0 0 12px}
.hba em{margin-top:14px}
.r115{height:118px;border-bottom:3px solid #f6f6f6}
.r51{height:54px;border-bottom:3px solid #f6f6f6}
.r50{height:53px;border-bottom:3px solid #f6f6f6}
.big{padding-top:4.400px}
.big p{font-size:30.1px;line-height:32px}
footer{margin-top:165px;height:194px;border-top:9px solid #ff000d;display:flex;font-family:Lato,sans-serif;font-weight:700;font-kerning:auto;color:#1a1a1a}
.disc{width:1260px;background:#e6e7e8;padding:5px 0 0 18px;font-size:16.860px;line-height:31px}
.addr{display:flex;font-size:21.050px;line-height:28px}
.soft{width:804px;color:#333}
.web{width:64px;font-size:19.800px}
.www{color:#e3202c;margin-left:3px;font-size:20.300px}
.cities{font-size:21.300px;line-height:34px}
.enq{flex:1;height:182.500px;background:#ff000d;color:#fff;text-align:center;padding-top:27px;font-weight:900}
.e1{font-size:34.500px;line-height:40px;letter-spacing:2px}
.e2{font-size:50px;line-height:60px;margin-top:6px;letter-spacing:2.200px}
.e3{margin-top:22.500px;padding-right:33px;text-align:right;font:700 29.850px/32px "Liberation Sans",sans-serif;color:#33262b}

.scroll{width:25px;background:#efefef;display:flex;flex-direction:column;align-items:center;padding:10px 0 7px}
.thumb{width:23px;height:103px;margin-top:279px;background:#cdcdcd}
.scroll svg:last-child{margin-top:auto}

/* floating tool palette */
.quick{position:absolute;left:19px;top:18px;width:58px;height:377px;background:#fff;border:2px solid #b1b1b1;border-radius:7px;display:flex;flex-direction:column;align-items:center;gap:12px;padding-top:4px}
.grip{width:48px;height:6px;border-radius:3px;background:#aaa}
.q{width:48px;height:48px;border-radius:4px}
.q.on{background:#0265dc}

/* find bar */
.find{position:absolute;left:2777px;top:12px;width:514px;height:72px;background:#fff;border:2px solid #b1b1b1;border-radius:6px;box-shadow:0 4px 7px rgba(0,0,0,.2);display:flex;align-items:center}
.fgrip{width:6px;height:48px;border-radius:3px;background:#b1b1b1;margin-left:10px}
.finput{margin-left:20px;width:203px;height:48px;border-bottom:2px solid #0265dc;display:flex;align-items:center;padding:0 0 2px 3px;color:#000}
.finput i{width:1px;height:26px;background:#000}
.count{margin-left:25px;width:27px;font-size:13.200px;color:#6e6e6e}
.f1{margin-left:21px}
.f2{margin-left:40px;transform:scaleX(-1)}
.f3{margin-left:34px;margin-top:-2px}
.find .vr{height:27px;margin:0 20px 0 18px}

.activate{position:absolute;left:2890px;top:1738px;color:#bababa;font-family:"Open Sans",sans-serif}
.activate p:first-child{font-size:28.800px;line-height:40px}
.activate p:last-child{font-size:20.900px;line-height:28px}

/* right rail */
.rail{width:72px;border-left:2px solid #ccc;display:flex;flex-direction:column;align-items:center;background:#fff}
.r1{margin-top:22px;color:#5d50d4}
.hr{width:31px;height:1px;background:#ddd;margin-top:19px}
.r2{margin-top:17px}
.r3{margin-top:28px}
.r4{margin-top:29px}
.pgbox{width:48px;height:48px;border:1px solid #a8a8a8;border-radius:6px;margin-top:1333px;line-height:44px;text-align:center;font-size:18px;color:#000}
.pgtot{margin-top:14px;color:#000}
.r5{margin-top:38px}
.r6{margin-top:39px;transform:scaleY(-1)}
.h2{width:49px;margin-top:21px}
.r7{margin-top:17px}
.r8{margin:23px 0 0 4px}
.r9{margin-top:22px}
.r10{margin-top:27px}

/* taskbar */
.taskbar{height:60px;background:#402f4c;display:flex;color:#fff;font-family:"Open Sans",sans-serif}
.start{width:72px;display:flex;align-items:center;justify-content:center}
.tsearch{width:432px;background:#f2f2f2;border:2px solid #bdbdbd;display:flex;align-items:center;padding-left:15px;color:#222;font-size:21.400px}
.tsearch span{margin:4px 0 0 17px;width:263px}
.apps{display:flex}
.apps div{width:75px;display:flex;align-items:center;justify-content:center;position:relative}
.run::after{content:"";position:absolute;left:8px;right:6px;bottom:0;height:3px;background:#76b9ed}
.active{background:linear-gradient(90deg,#675870,#675870) 1px 0/73px 60px no-repeat}
.active::after{left:1px;right:1px}
.lr{width:34px;height:33px;border:2px solid #b3d3ef;background:#0a1822;color:#b3d3ef;font-size:20px;line-height:28px;text-align:center;margin-top:-2px}
.pr{width:34px;height:32px;border-radius:5px;background:#00005b;color:#9d9bff;font-size:19px;font-weight:600;line-height:30px;text-align:center;margin-top:-2px}
.pdf{width:34px;height:32px;border-radius:5px;background:#b30b00;color:#fff;display:flex;align-items:center;justify-content:center;margin-top:-3px}
.badge{position:absolute;left:38px;top:27px;width:14px;font-size:13px;text-align:center;color:#e6dcf5;font-weight:600}
.tray{margin-left:auto;display:flex;align-items:center}
.deg{margin-left:12px;width:56px;font-size:19.600px;padding-top:2px}
.wind{width:59px;font-size:20.300px;padding-top:2px}
.t1{margin-left:38px}
.t2{margin-left:14px}
.t3{margin-left:12px}
.clock{margin-left:16px;width:94px;height:60px;padding-top:2px;display:flex;flex-direction:column;align-items:center;line-height:28px;font-size:17.200px}
.clock span:last-child{font-size:17.800px}
.note{position:relative;margin:0 0 0 29px}
.note b{position:absolute;left:11px;top:13px;width:24px;height:24px;border-radius:12px;background:#35333b;border:1px solid #77707f;font-size:15px;line-height:21px;text-align:center}
.peek{width:2px;height:60px;background:#857a8c;margin:0 6px 0 30px}
```
